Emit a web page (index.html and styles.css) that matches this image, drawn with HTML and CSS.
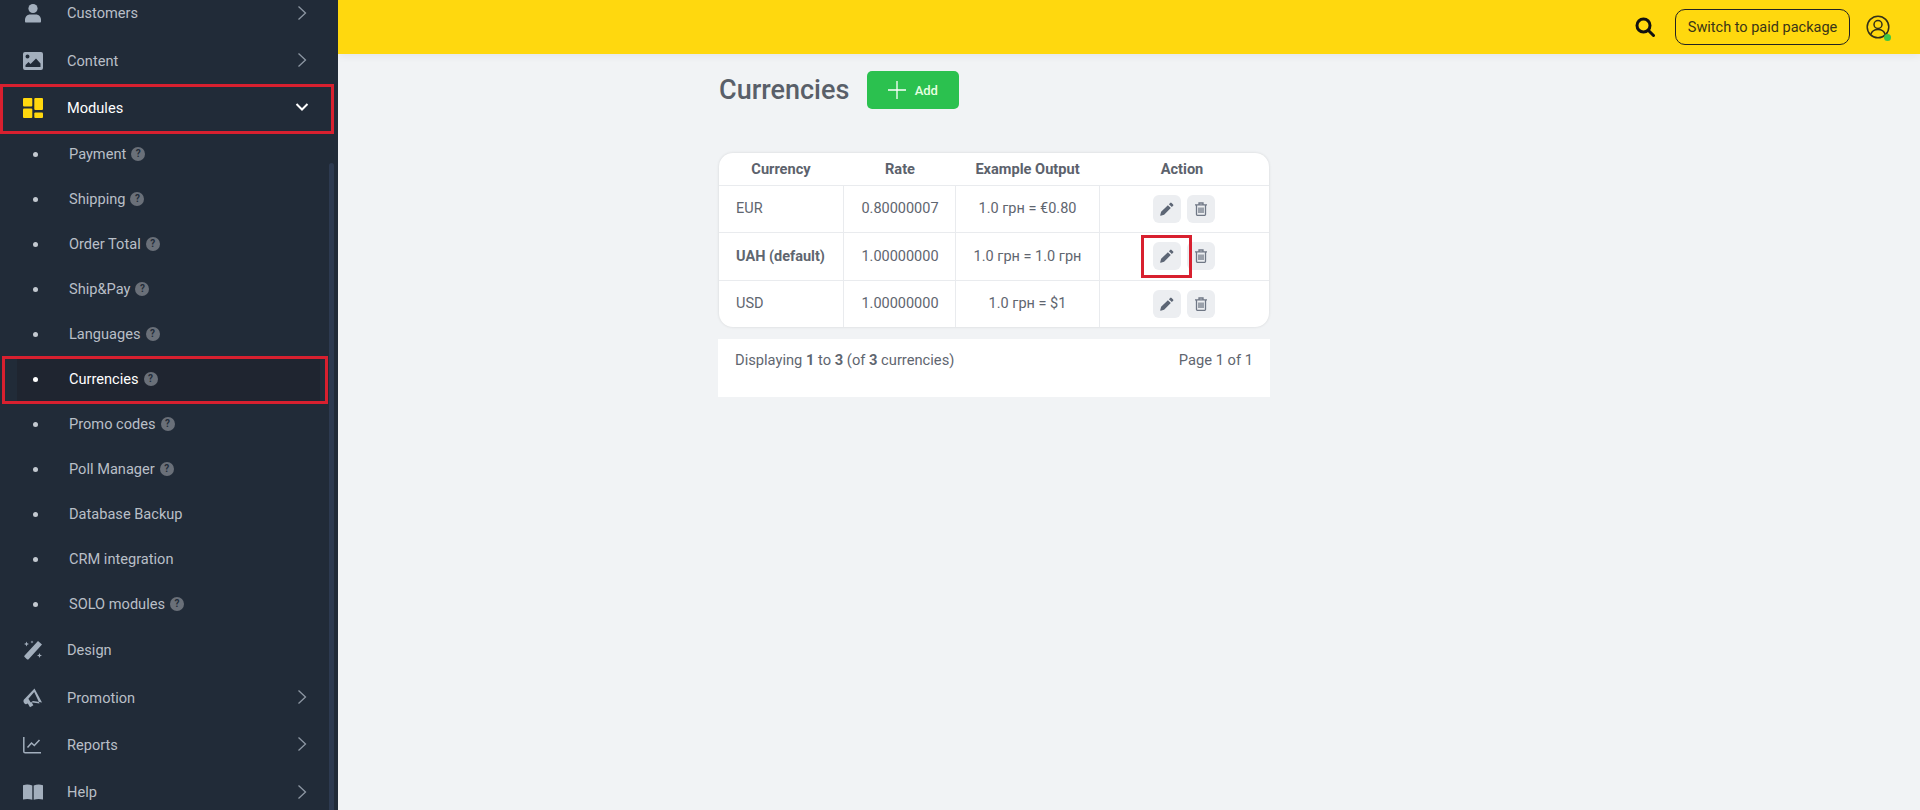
FILE: index.html
```html
<!DOCTYPE html>
<html lang="en">
<head>
  <meta charset="UTF-8">
  <title>Currencies</title>
  <link rel="stylesheet" href="styles.css">
</head>
<body>
  <aside class="sidebar">
    <ul class="menu">
      <li class="menu-item">
        <svg class="menu-icon" viewBox="0 0 20 20"><circle cx="10" cy="5.5" r="4.6"/><path d="M2 18.5v-1.600c0-3.200 2.400-5.400 5-5.400h6c2.600 0 5 2.200 5 5.400v1.600c0 .5-.4 1-1 1H3c-.6 0-1-.5-1-1z"/></svg>
        <span class="menu-label">Customers</span>
        <svg class="chevron" viewBox="0 0 10 16"><path d="M1.500 1.500 8.500 8l-7 6.500"/></svg>
      </li>
      <li class="menu-item">
        <svg class="menu-icon" viewBox="0 0 20 18"><path fill-rule="evenodd" d="M2 0h16a2 2 0 0 1 2 2v14a2 2 0 0 1-2 2H2a2 2 0 0 1-2-2V2a2 2 0 0 1 2-2zm2.500 2.600a2 2 0 1 0 0 4 2 2 0 0 0 0-4zM2.500 15h15v-3.500L13 6.500 7.500 12 5.500 10l-3 3z"/></svg>
        <span class="menu-label">Content</span>
        <svg class="chevron" viewBox="0 0 10 16"><path d="M1.500 1.500 8.500 8l-7 6.500"/></svg>
      </li>
      <li class="menu-item is-open marked-modules">
        <svg class="menu-icon" viewBox="0 0 20 20"><rect x="0" y="0" width="9.300" height="8.600" rx="1"/><rect x="0" y="10.600" width="9.300" height="9.400" rx="1"/><rect x="11.300" y="0" width="8.700" height="12" rx="1"/><rect x="11.300" y="14.600" width="8.700" height="5.400" rx="1"/></svg>
        <span class="menu-label">Modules</span>
        <svg class="chevron-down" viewBox="0 0 14 10"><path d="M1.500 2 7 7.500 12.500 2"/></svg>
      </li>
      <li class="sub-item"><span class="dot"></span><span>Payment</span><span class="hint">?</span></li>
      <li class="sub-item"><span class="dot"></span><span>Shipping</span><span class="hint">?</span></li>
      <li class="sub-item"><span class="dot"></span><span>Order Total</span><span class="hint">?</span></li>
      <li class="sub-item"><span class="dot"></span><span>Ship&amp;Pay</span><span class="hint">?</span></li>
      <li class="sub-item"><span class="dot"></span><span>Languages</span><span class="hint">?</span></li>
      <li class="sub-item is-current"><span class="dot"></span><span>Currencies</span><span class="hint">?</span></li>
      <li class="sub-item"><span class="dot"></span><span>Promo codes</span><span class="hint">?</span></li>
      <li class="sub-item"><span class="dot"></span><span>Poll Manager</span><span class="hint">?</span></li>
      <li class="sub-item"><span class="dot"></span><span>Database Backup</span></li>
      <li class="sub-item"><span class="dot"></span><span>CRM integration</span></li>
      <li class="sub-item"><span class="dot"></span><span>SOLO modules</span><span class="hint">?</span></li>
      <li class="menu-item">
        <svg class="menu-icon" viewBox="0 0 20 20"><path d="M15 1l4 3.500L5.600 19.200c-.5.500-1.200.500-1.700 0l-2.300-2.100c-.5-.5-.5-1.200 0-1.700z"/><path d="M3.500 1.500l.7 1.800 1.800.7-1.800.7-.7 1.800-.7-1.800L1 4l1.800-.7zM16.500 13l.7 1.800 1.800.7-1.800.7-.7 1.800-.7-1.800-1.800-.7 1.800-.7zM9 .5l.4 1.100 1.100.4-1.100.4L9 3.500l-.4-1.100L7.500 2l1.100-.4z"/></svg>
        <span class="menu-label">Design</span>
      </li>
      <li class="menu-item">
        <svg class="menu-icon" viewBox="0 0 20 20"><path fill-rule="evenodd" d="M11.500.5 19 14.500l-5.500-1-3.500-.6-1.600 1 2 3.400-3.400 2-2.200-3.700-1.300.5C2.500 16.800 1 15.500.6 14c-.4-1.400.2-2.800 1.400-3.600zm-.3 3.600-5.800 6.700 2.200 3.500 9 1.300z"/></svg>
        <span class="menu-label">Promotion</span>
        <svg class="chevron" viewBox="0 0 10 16"><path d="M1.500 1.500 8.500 8l-7 6.500"/></svg>
      </li>
      <li class="menu-item">
        <svg class="menu-icon line-icon" viewBox="0 0 20 18"><path d="M.8 1v14.500c0 .8.500 1.300 1.300 1.300H18"/><path d="M4.500 11.500 8.500 7l2.800 2.500L16.500 4"/></svg>
        <span class="menu-label">Reports</span>
        <svg class="chevron" viewBox="0 0 10 16"><path d="M1.500 1.500 8.500 8l-7 6.500"/></svg>
      </li>
      <li class="menu-item">
        <svg class="menu-icon" viewBox="0 0 20 16"><path d="M0 1.200C3 .3 6.500.4 9.300 1.500v14.200C6.500 14.700 3 14.600 0 15.500zM20 1.200C17 .3 13.500.4 10.700 1.500v14.200c2.800-1 6.300-1.100 9.300-.2z"/></svg>
        <span class="menu-label">Help</span>
        <svg class="chevron" viewBox="0 0 10 16"><path d="M1.500 1.500 8.500 8l-7 6.500"/></svg>
      </li>
    </ul>
    <div class="side-scroll"></div>
  </aside>

  <div class="page">
    <header class="topbar">
      <svg class="search-icon" viewBox="0 0 20 20"><circle cx="8.500" cy="8.500" r="6.500"/><path d="M13.500 13.500 18.500 18.500"/></svg>
      <button class="upgrade-btn">Switch to paid package</button>
      <span class="account">
        <svg class="account-icon" viewBox="0 0 24 24"><circle cx="12" cy="12" r="10.800"/><circle cx="12" cy="9.500" r="4"/><path d="M4.800 19.500c1-3.300 3.600-5 7.200-5s6.200 1.700 7.200 5"/></svg>
        <span class="online-dot"></span>
      </span>
    </header>

    <main class="content">
      <div class="title-row">
        <h1>Currencies</h1>
        <button class="add-btn">
          <svg viewBox="0 0 20 20"><path d="M10 1v18M1 10h18"/></svg>
          Add
        </button>
      </div>

      <div class="table-card">
        <table>
          <thead>
            <tr><th>Currency</th><th>Rate</th><th>Example Output</th><th class="action-head">Action</th></tr>
          </thead>
          <tbody>
            <tr>
              <td class="name">EUR</td>
              <td>0.80000007</td>
              <td>1.0 грн = €0.80</td>
              <td>
                <div class="actions">
                  <span class="icon-btn"><svg class="pencil" viewBox="0 0 14 14"><path d="M10.200.9a1 1 0 0 1 1.400 0l1.500 1.500a1 1 0 0 1 0 1.400l-1.300 1.300-2.900-2.900zM7.900 3.200l2.900 2.900-6.700 6.700-3.400.9a.4.4 0 0 1-.5-.5l.9-3.400z"/></svg></span>
                  <span class="icon-btn"><svg class="trash" viewBox="0 0 14 14"><path d="M1 2.800h12M5 2.500V1h4v1.500M2.500 3v9.500c0 .4.300.8.800.8h7.400c.5 0 .8-.4.800-.8V3M5 5.500v5.500M7 5.500v5.500M9 5.500v5.500"/></svg></span>
                </div>
              </td>
            </tr>
            <tr class="row-default">
              <td class="name"><b>UAH (default)</b></td>
              <td>1.00000000</td>
              <td>1.0 грн = 1.0 грн</td>
              <td>
                <div class="actions">
                  <span class="icon-btn marked-edit"><svg class="pencil" viewBox="0 0 14 14"><path d="M10.200.9a1 1 0 0 1 1.400 0l1.500 1.500a1 1 0 0 1 0 1.400l-1.300 1.300-2.900-2.900zM7.900 3.200l2.900 2.900-6.700 6.700-3.400.9a.4.4 0 0 1-.5-.5l.9-3.400z"/></svg></span>
                  <span class="icon-btn"><svg class="trash" viewBox="0 0 14 14"><path d="M1 2.800h12M5 2.500V1h4v1.500M2.500 3v9.500c0 .4.300.8.800.8h7.400c.5 0 .8-.4.800-.8V3M5 5.500v5.500M7 5.500v5.500M9 5.500v5.500"/></svg></span>
                </div>
              </td>
            </tr>
            <tr>
              <td class="name">USD</td>
              <td>1.00000000</td>
              <td>1.0 грн = $1</td>
              <td>
                <div class="actions">
                  <span class="icon-btn"><svg class="pencil" viewBox="0 0 14 14"><path d="M10.200.9a1 1 0 0 1 1.400 0l1.500 1.500a1 1 0 0 1 0 1.400l-1.300 1.300-2.900-2.900zM7.900 3.200l2.900 2.900-6.700 6.700-3.400.9a.4.4 0 0 1-.5-.5l.9-3.400z"/></svg></span>
                  <span class="icon-btn"><svg class="trash" viewBox="0 0 14 14"><path d="M1 2.800h12M5 2.500V1h4v1.500M2.500 3v9.500c0 .4.300.8.800.8h7.400c.5 0 .8-.4.800-.8V3M5 5.500v5.500M7 5.500v5.500M9 5.500v5.500"/></svg></span>
                </div>
              </td>
            </tr>
          </tbody>
        </table>
      </div>

      <div class="pager">
        <span>Displaying <b>1</b> to <b>3</b> (of <b>3</b> currencies)</span>
        <span>Page 1 of 1</span>
      </div>
    </main>
  </div>
</body>
</html>
```

FILE: styles.css
```css
*, *::after {
  box-sizing: border-box;
}
body {
  margin: 0;
  height: 810px;
  overflow: hidden;
  display: flex;
  font-family: Roboto, "Liberation Sans", sans-serif;
  background: #f1f3f5;
}

/* sidebar */
.sidebar {
  position: relative;
  width: 338px;
  height: 810px;
  flex-shrink: 0;
  overflow: hidden;
  background: #212b38;
}
.menu {
  list-style: none;
  margin: -10.2px 0 0;
  padding: 0;
}
.menu-item {
  position: relative;
  display: flex;
  align-items: center;
  height: 47.3px;
  padding-left: 23px;
  color: #b9bfc7;
  font-size: 14.6px;
}
.menu-icon {
  width: 20px;
  height: 20px;
  fill: #a3afbd;
  flex-shrink: 0;
}
.line-icon {
  fill: none;
  stroke: #a3afbd;
  stroke-width: 1.5;
}
.menu-label {
  margin-left: 24px;
}
.chevron {
  position: absolute;
  left: 297px;
  top: 15px;
  width: 10px;
  height: 16px;
  fill: none;
  stroke: #8d97a3;
  stroke-width: 1.3;
}
.is-open {
  color: #fff;
}
.is-open .menu-icon {
  fill: #ffd80e;
}
.chevron-down {
  position: absolute;
  left: 295px;
  top: 18px;
  width: 14px;
  height: 10px;
  fill: none;
  stroke: #fff;
  stroke-width: 2;
}
.marked-modules::after {
  content: "";
  position: absolute;
  left: 0;
  top: 0;
  width: 334px;
  height: 50px;
  border: 3px solid #d8202f;
}
.sub-item {
  position: relative;
  display: flex;
  align-items: center;
  height: 45px;
  padding-left: 33px;
  color: #b9bfc7;
  font-size: 14.6px;
}
.dot {
  width: 5px;
  height: 5px;
  margin-right: 31px;
  border-radius: 50%;
  background: #c3c9d0;
}
.hint {
  width: 14px;
  height: 14px;
  margin-left: 5px;
  border-radius: 50%;
  background: #6a7079;
  color: #212b38;
  font-size: 10px;
  font-weight: 700;
  line-height: 14px;
  text-align: center;
}
.is-current {
  color: #fff;
  background: linear-gradient(#1f2530, #1f2530) 17px 0 / 303px 100% no-repeat;
}
.is-current .dot {
  background: #fff;
}
.is-current::after {
  content: "";
  position: absolute;
  left: 2px;
  top: -1px;
  width: 326px;
  height: 48px;
  border: 3px solid #d8202f;
}
.side-scroll {
  position: absolute;
  left: 329px;
  top: 163px;
  bottom: 0;
  width: 5px;
  border-radius: 3px 3px 0 0;
  background: #2d3a50;
}

/* top bar */
.page {
  flex: 1;
  min-width: 0;
}
.topbar {
  display: flex;
  align-items: center;
  justify-content: flex-end;
  height: 54px;
  padding-right: 30px;
  background: #ffd80e;
  box-shadow: 0 2px 8px rgba(0, 0, 0, 0.06);
}
.search-icon {
  width: 20px;
  height: 20px;
  fill: none;
  stroke: #111;
  stroke-width: 3;
  stroke-linecap: round;
}
.upgrade-btn {
  width: 175px;
  height: 36px;
  margin-left: 20px;
  border: 1.5px solid #222;
  border-radius: 10px;
  background: transparent;
  color: #3a3516;
  font-family: inherit;
  font-size: 14.5px;
}
.account {
  position: relative;
  width: 24px;
  height: 24px;
  margin-left: 16px;
}
.account-icon {
  display: block;
  width: 24px;
  height: 24px;
  fill: none;
  stroke: #33301a;
  stroke-width: 1.5;
}
.online-dot {
  position: absolute;
  right: -1px;
  bottom: -2px;
  width: 7px;
  height: 7px;
  border-radius: 50%;
  background: #3ec747;
}

/* content */
.content {
  width: 552px;
  margin-left: 380px;
  padding-top: 17px;
}
.title-row {
  display: flex;
  align-items: center;
  height: 38px;
  padding-left: 1px;
}
h1 {
  margin: 0;
  color: #595f69;
  font-size: 27px;
  font-weight: 500;
}
.add-btn {
  display: flex;
  align-items: center;
  justify-content: center;
  gap: 8px;
  width: 92px;
  height: 38px;
  margin-left: 18px;
  padding-left: 4px;
  border: 0;
  border-radius: 5px;
  background: #2bc14f;
  color: #e6ffe0;
  font-family: inherit;
  font-size: 13px;
  font-weight: 500;
}
.add-btn svg {
  width: 20px;
  height: 20px;
  fill: none;
  stroke: #fff;
  stroke-width: 1.3;
}
.table-card {
  margin: 44px 1px 0;
  border-radius: 14px;
  background: #fff;
  box-shadow: 0 0 3px rgba(0, 0, 0, 0.12);
  overflow: hidden;
}
table {
  width: 550px;
  border-collapse: collapse;
  table-layout: fixed;
  color: #5f6670;
  font-size: 14.5px;
}
th:nth-child(1) { width: 124px; }
th:nth-child(2) { width: 112px; }
th:nth-child(3) { width: 144px; }
th {
  height: 32px;
  padding: 0;
  border-bottom: 1px solid #e9ebee;
  color: #5c626c;
  font-weight: 700;
  font-size: 14.6px;
}
th:nth-child(2), td:nth-child(2) {
  padding-left: 2px;
}
th:nth-child(3), td:nth-child(3) {
  padding-left: 1px;
}
.action-head {
  padding-right: 4px;
}
td {
  height: 47px;
  padding: 0;
  border-left: 1px solid #e9ebee;
  border-top: 1px solid #e9ebee;
  text-align: center;
}
td:first-child {
  border-left: 0;
}
.row-default td {
  height: 48px;
}
.name {
  padding-left: 17px;
  text-align: left;
}
.name b {
  font-weight: 700;
}
.actions {
  display: flex;
  justify-content: center;
  gap: 6px;
}
.icon-btn {
  position: relative;
  display: flex;
  align-items: center;
  justify-content: center;
  width: 28px;
  height: 28px;
  border-radius: 6px;
  background: #eceef1;
}
.pencil {
  width: 14px;
  height: 14px;
  fill: #5d6675;
}
.trash {
  width: 14px;
  height: 14px;
  fill: none;
  stroke: #6f7785;
  stroke-width: 1.3;
}
.marked-edit {
  z-index: 1;
}
.marked-edit::after {
  content: "";
  position: absolute;
  left: -12px;
  top: -7px;
  width: 51px;
  height: 43px;
  border: 3px solid #d8202f;
}
.pager {
  display: flex;
  justify-content: space-between;
  height: 58px;
  margin-top: 12px;
  padding: 11px 17px;
  background: #fff;
  color: #5f6670;
  font-size: 14.7px;
  line-height: 20px;
}
.pager b {
  font-weight: 700;
}
```
